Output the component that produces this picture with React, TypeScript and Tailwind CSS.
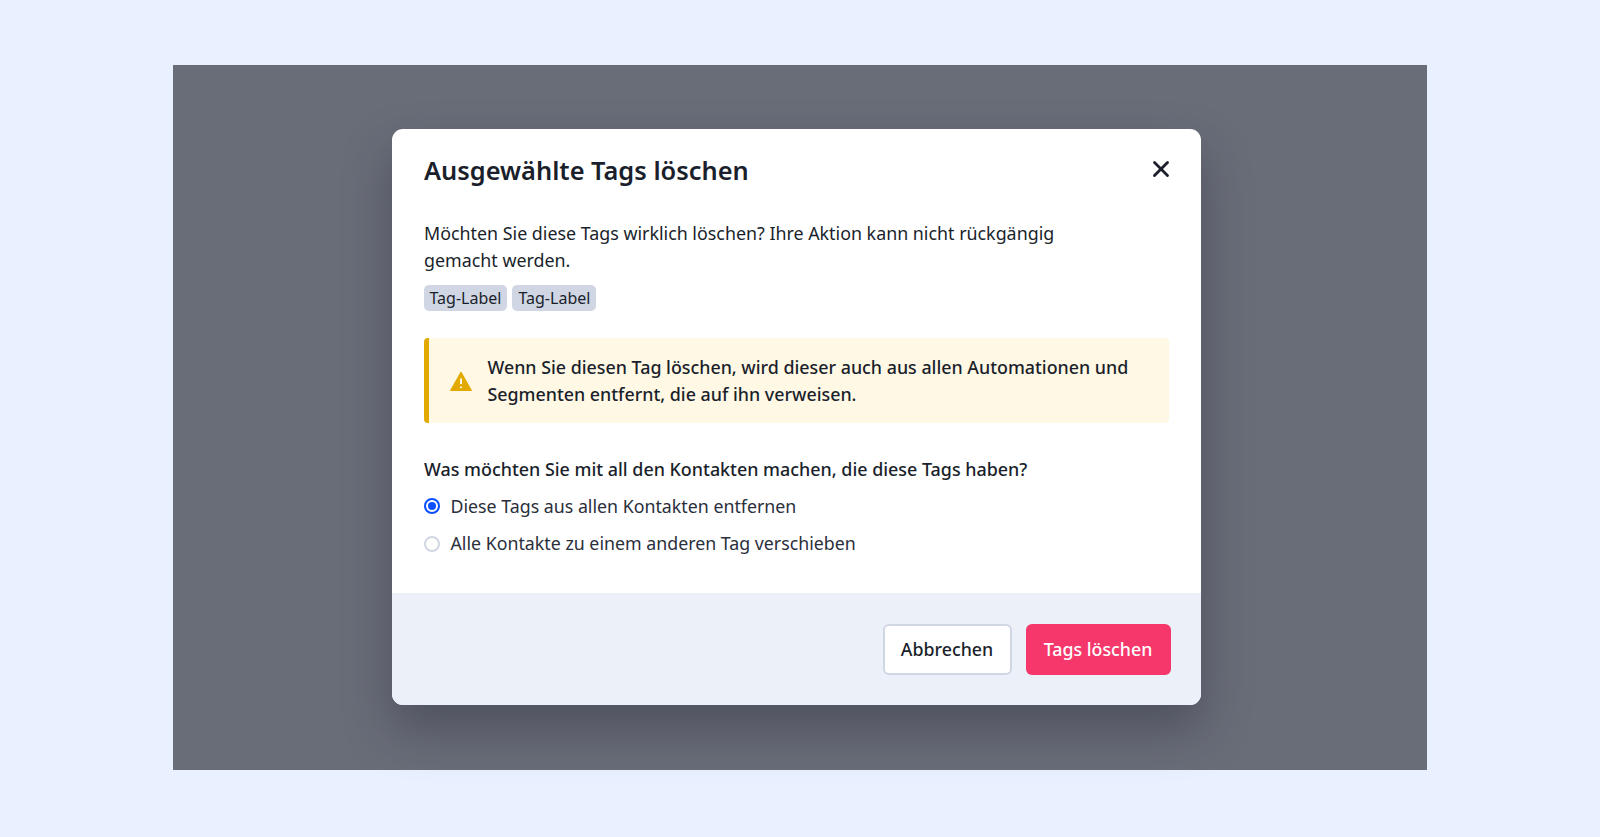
import React from 'react';
import { X } from 'lucide-react';

const font = "font-['Noto_Sans',sans-serif]";

const Tag = ({ label }: { label: string }) => (
  <span className="h-[26px] px-[6px] flex items-center rounded-[5px] bg-[#d0d6e3] text-[16px] text-[#1a1f2b]">
    {label}
  </span>
);

const Radio = ({ checked, label }: { checked?: boolean; label: string }) => (
  <label className="flex items-center h-[26px] gap-[11px]">
    {checked ? (
      <span className="w-4 h-4 rounded-full border-2 border-[#0b4fff] flex items-center justify-center">
        <span className="w-2 h-2 rounded-full bg-[#0b4fff]" />
      </span>
    ) : (
      <span className="w-4 h-4 rounded-full border-2 border-[#d0d6e3] bg-white" />
    )}
    <span className="text-[17.8px] text-[#2a2f3b]">{label}</span>
  </label>
);

export default function App() {
  return (
    <div className={`w-full h-[837px] overflow-hidden bg-[#e9f0ff] flex justify-center pt-[65px] ${font}`}>
      <div className="w-[1254px] h-[705px] bg-[#696d78] flex justify-center pt-[64px] pr-[8px]">
        <div className="w-[809px] h-[576px] rounded-[11px] bg-white flex flex-col overflow-hidden shadow-[0_24px_48px_rgba(30,32,45,0.35)]">
          <div className="flex-1 px-8 pt-[23px]">
            <div className="flex items-center justify-between h-[36px]">
              <h2 className="text-[25.4px] font-semibold text-[#1a1f2b] ml-[0.5px]">Ausgewählte Tags löschen</h2>
              <X className="w-[26px] h-[26px] -mr-[5px] -mt-[2px] text-[#1a1f2b]" strokeWidth={2.6} />
            </div>
            <p className="mt-[32px] w-[650px] text-[17.85px] leading-[26.5px] text-[#1a1f2b] ml-[0.5px]">
              Möchten Sie diese Tags wirklich löschen? Ihre Aktion kann nicht rückgängig gemacht werden.
            </p>
            <div className="flex gap-[5px] mt-[12px]">
              <Tag label="Tag-Label" />
              <Tag label="Tag-Label" />
            </div>
            <div className="mt-[27px] h-[85px] rounded-[4px] bg-[#fff8e5] border-l-[5px] border-[#e2a900] flex items-center pl-[21px] gap-[16px]">
              <svg viewBox="0 0 22 20" className="w-[22px] h-[20px] shrink-0">
                <path
                  fill="#e2a900"
                  fillRule="evenodd"
                  stroke="#e2a900"
                  strokeWidth="1"
                  strokeLinejoin="round"
                  d="M11 1 21.5 19.5H.5ZM9.5 7v6.5h3V7ZM9.5 15v2.6h3V15Z"
                />
              </svg>
              <p className="text-[17.85px] leading-[26.5px] font-medium text-[#1a1f2b]">
                Wenn Sie diesen Tag löschen, wird dieser auch aus allen Automationen und
                <br />
                Segmenten entfernt, die auf ihn verweisen.
              </p>
            </div>
            <p className="mt-[33px] text-[17.9px] leading-[26px] font-medium text-[#1a1f2b] ml-[0.5px]">
              Was möchten Sie mit all den Kontakten machen, die diese Tags haben?
            </p>
            <div className="mt-[11px] flex flex-col gap-[11.5px]">
              <Radio checked label="Diese Tags aus allen Kontakten entfernen" />
              <Radio label="Alle Kontakte zu einem anderen Tag verschieben" />
            </div>
          </div>
          <div className="h-[112px] bg-[#ecf0f8] flex items-center justify-end gap-[13px] pr-[30px]">
            <button className="w-[129px] h-[51px] rounded-[6px] bg-white border-2 border-[#d0d6e3] text-[17.8px] font-medium text-[#1a1f2b] -translate-x-px">
              Abbrechen
            </button>
            <button className="w-[145px] h-[51px] rounded-[6px] bg-[#f5376b] text-[17.8px] font-medium text-white">
              Tags löschen
            </button>
          </div>
        </div>
      </div>
    </div>
  );
}
